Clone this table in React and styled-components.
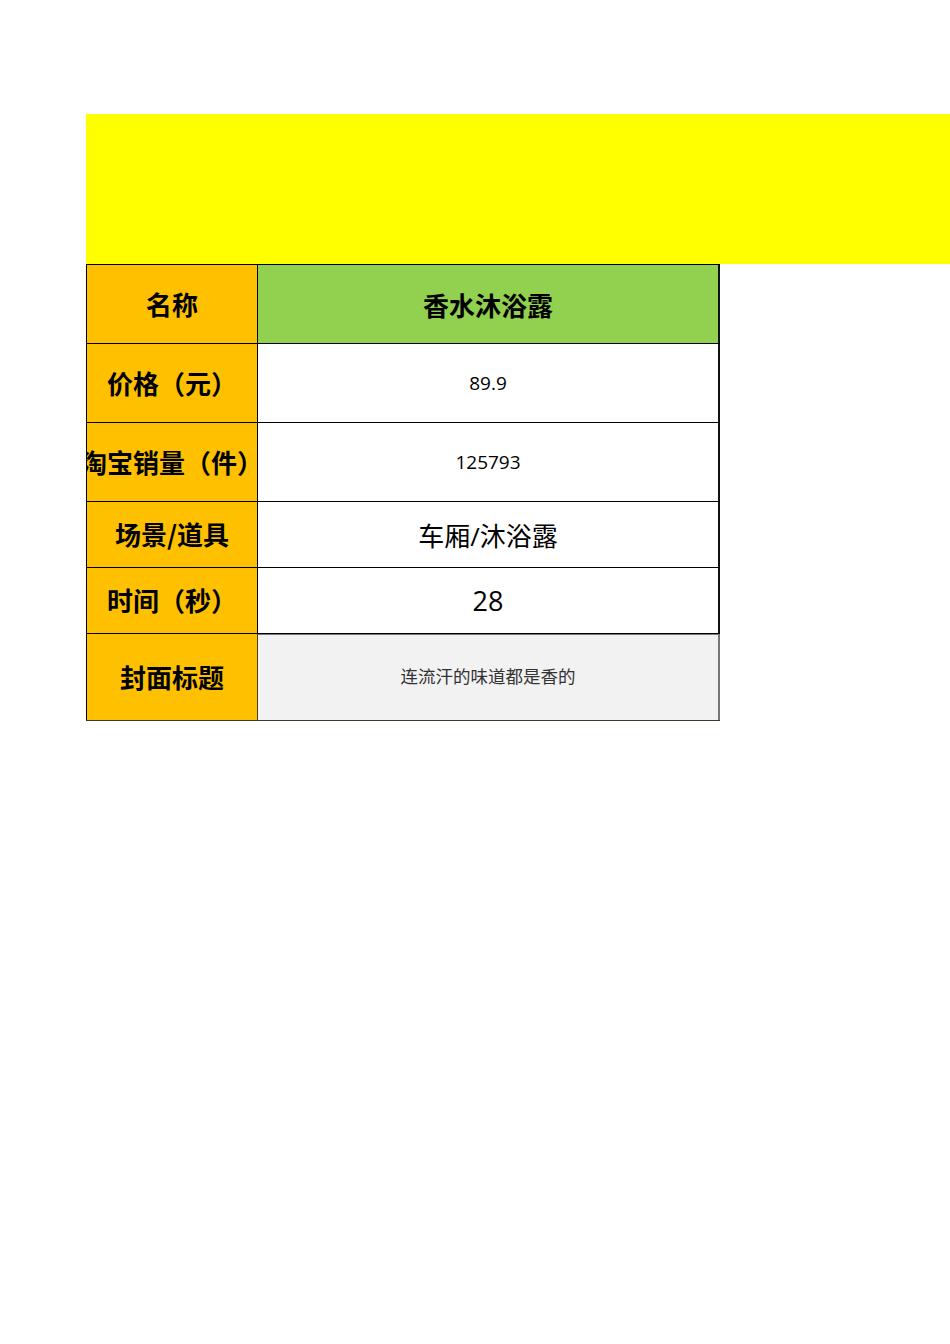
import styled, { createGlobalStyle } from "styled-components";

const GlobalStyle = createGlobalStyle`
  html, body {
    margin: 0;
    padding: 0;
    background: #ffffff;
  }
  body {
    font-family: "Open Sans", "Noto Sans CJK SC", sans-serif;
    color: #000;
  }
`;

const rows = [
  { label: "名称", value: "香水沐浴露", height: 79, kind: "head" },
  { label: "价格（元）", value: "89.9", height: 79, kind: "small" },
  { label: "淘宝销量（件）", value: "125793", height: 79, kind: "small" },
  { label: "场景/道具", value: "车厢/沐浴露", height: 66, kind: "large" },
  { label: "时间（秒）", value: "28", height: 66, kind: "number" },
  { label: "封面标题", value: "连流汗的味道都是香的", height: 87, kind: "note" },
];

function App() {
  return (
    <Page>
      <GlobalStyle />
      <Banner />
      <Sheet>
        {rows.map((row, i) => (
          <Row key={row.label} $height={row.height} $last={i === rows.length - 1}>
            <Label $last={i === rows.length - 1}>
              <LabelText>{row.label}</LabelText>
            </Label>
            <Value $kind={row.kind}>{row.value}</Value>
          </Row>
        ))}
      </Sheet>
    </Page>
  );
}

const Page = styled.div`
  padding: 114px 0 0 86px;
  min-height: 1344px;
  box-sizing: border-box;
`;

const Banner = styled.div`
  height: 150px;
  background: #ffff00;
`;

const Sheet = styled.div`
  width: 634px;
  display: flex;
  flex-direction: column;
  border-top: 1px solid #000;
  box-sizing: border-box;
`;

const Row = styled.div`
  display: grid;
  grid-template-columns: 172px 462px;
  height: ${(p) => p.$height}px;
  border-bottom: 1px solid ${(p) => (p.$last ? "#3a3a2a" : "#000")};
  box-sizing: border-box;
`;

const Label = styled.div`
  background: #ffc000;
  border-left: 1px solid #000;
  border-right: 1px solid ${(p) => (p.$last ? "#4a3e10" : "#000")};
  display: flex;
  align-items: center;
  justify-content: center;
  overflow: hidden;
  box-sizing: border-box;
`;

const LabelText = styled.span`
  font-family: "Noto Sans CJK SC", sans-serif;
  font-weight: 700;
  font-size: 26px;
  white-space: nowrap;
  padding-bottom: 2px;
`;

const valueStyles = {
  head: `
    background: #92d050;
    font-family: "Noto Sans CJK SC", sans-serif;
    font-weight: 700;
    font-size: 26px;
    color: #000;
  `,
  small: `
    background: #ffffff;
    font-size: 19px;
    color: #000;
  `,
  large: `
    background: #ffffff;
    font-size: 26px;
    color: #000;
  `,
  number: `
    background: #ffffff;
    font-size: 27px;
    color: #000;
  `,
  note: `
    background: #f2f2f2;
    font-size: 17.5px;
    color: #333;
    padding-bottom: 4px;
  `,
};

const Value = styled.div`
  display: flex;
  align-items: center;
  justify-content: center;
  border-right: 2px solid #111;
  box-sizing: border-box;
  white-space: nowrap;
  ${(p) => valueStyles[p.$kind]}
  ${(p) => (p.$kind === "note" ? "border-right-color: #777; border-top: 1px solid #777;" : "")}
`;

export default App;
